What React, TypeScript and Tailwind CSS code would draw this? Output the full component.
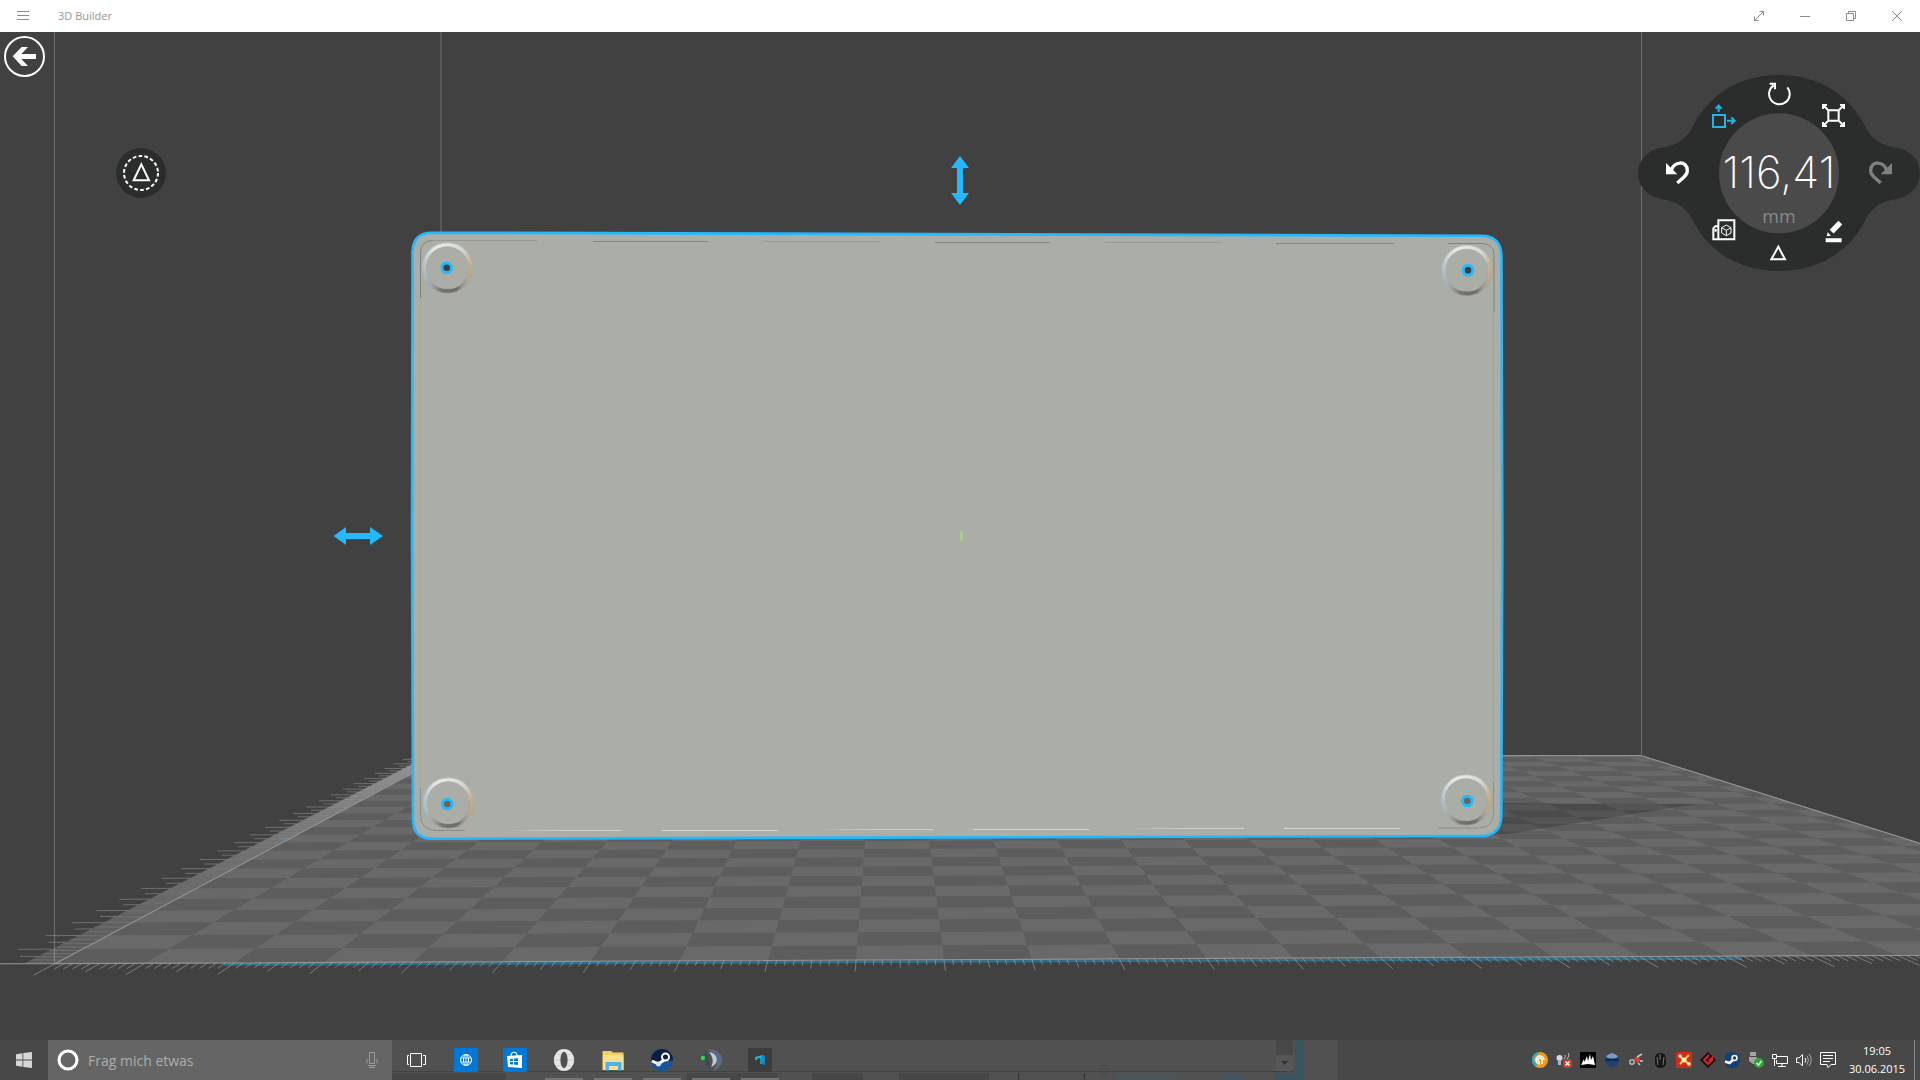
import type { ReactNode } from "react";

type Point = [number, number];

// 254 mm plate, one cell is 10 mm
const PLATE = 25.4;

// build plate corners on the canvas
const FRONT_LEFT: Point = [55, 963.7];
const FRONT_RIGHT: Point = [2271, 953.7];
const BACK_RIGHT: Point = [1641, 755.5];
const BACK_LEFT: Point = [442, 757.5];

function createProjection(p0: Point, p1: Point, p2: Point, p3: Point) {
  const dx1 = p1[0] - p2[0];
  const dx2 = p3[0] - p2[0];
  const dx3 = p0[0] - p1[0] + p2[0] - p3[0];
  const dy1 = p1[1] - p2[1];
  const dy2 = p3[1] - p2[1];
  const dy3 = p0[1] - p1[1] + p2[1] - p3[1];
  const det = dx1 * dy2 - dx2 * dy1;
  const g = (dx3 * dy2 - dx2 * dy3) / det;
  const h = (dx1 * dy3 - dx3 * dy1) / det;
  const a = p1[0] - p0[0] + g * p1[0];
  const b = p3[0] - p0[0] + h * p3[0];
  const d = p1[1] - p0[1] + g * p1[1];
  const e = p3[1] - p0[1] + h * p3[1];

  return (col: number, row: number): string => {
    const u = col / PLATE;
    const v = row / PLATE;
    const w = g * u + h * v + 1;
    return `${((a * u + b * v + p0[0]) / w).toFixed(2)} ${((d * u + e * v + p0[1]) / w).toFixed(2)}`;
  };
}

const project = createProjection(FRONT_LEFT, FRONT_RIGHT, BACK_RIGHT, BACK_LEFT);

function buildLightCells(): string {
  let d = "";
  for (let row = 0; row < PLATE; row++) {
    for (let col = 0; col < PLATE; col++) {
      if ((row + col) % 2 === 0) continue;
      const right = Math.min(col + 1, PLATE);
      const back = Math.min(row + 1, PLATE);
      d += `M${project(col, row)}L${project(right, row)}L${project(right, back)}L${project(col, back)}Z`;
    }
  }
  return d;
}

function tickLength(i: number): number {
  if (i % 10 === 0) return 0.74;
  if (i % 5 === 0) return 0.55;
  return 0.35;
}

function buildTicks(side: "front" | "left"): string {
  let d = "";
  for (let i = 0; i <= PLATE * 10; i++) {
    const len = tickLength(i);
    const pos = i / 10;
    d += side === "front" ? `M${project(pos, 0)}L${project(pos, -len)}` : `M${project(0, pos)}L${project(-len, pos)}`;
  }
  return d;
}

const LIGHT_CELLS = buildLightCells();
const FRONT_TICKS = buildTicks("front");
const LEFT_TICKS = buildTicks("left");

const FEET: { foot: Point; hole: Point; fill: string }[] = [
  { foot: [447.5, 268], hole: [446.7, 267.7], fill: "#3c3f40" },
  { foot: [1467, 270.5], hole: [1468, 270.3], fill: "#3c3f40" },
  { foot: [448.5, 803], hole: [447.3, 804], fill: "#69665f" },
  { foot: [1466.3, 800], hole: [1467.3, 801], fill: "#69665f" },
];

const TOP_SEAMS = [
  [432, 537, 240.5],
  [593, 708, 241.5],
  [764, 880, 241.5],
  [935, 1050, 242.5],
  [1105, 1222, 242.5],
  [1276, 1394, 243.5],
];

const BOTTOM_SEAMS = [
  [505, 622, 830.5],
  [661, 778, 830.5],
  [817, 933, 829.5],
  [973, 1089, 829.5],
  [1129, 1244, 828.5],
  [1284, 1400, 828.5],
];

function Scene() {
  return (
    <svg
      className="absolute inset-0 h-full w-full"
      viewBox="0 32 1920 1008"
      preserveAspectRatio="xMidYMid slice"
      aria-hidden="true"
    >
      <defs>
        <linearGradient id="rim" x1="0.35" y1="0" x2="0.65" y2="1">
          <stop offset="0" stopColor="#e9ebe9" />
          <stop offset="0.3" stopColor="#c4c9c8" />
          <stop offset="0.65" stopColor="#93918c" />
          <stop offset="1" stopColor="#6c6b69" />
        </linearGradient>
        <linearGradient id="rimTint">
          <stop offset="0" stopColor="#a8c2d0" stopOpacity="0.6" />
          <stop offset="0.35" stopColor="#ffffff" stopOpacity="0" />
          <stop offset="0.7" stopColor="#ffffff" stopOpacity="0" />
          <stop offset="1" stopColor="#cdb588" stopOpacity="0.75" />
        </linearGradient>
        <linearGradient id="seamFade">
          <stop offset="0" stopColor="#cfd0cb" stopOpacity="0" />
          <stop offset="0.5" stopColor="#cfd0cb" />
        </linearGradient>
      </defs>

      {/* room edges */}
      <path d="M54.5 32V963M441 32V240M1641.5 32V755M0 963.7H56" stroke="#6a6a6a" strokeWidth="1.2" />

      {/* build plate */}
      <path
        d={`M${project(0, 0)}L${project(PLATE, 0)}L${project(PLATE, PLATE)}L${project(0, PLATE)}Z`}
        fill="#5d5d5d"
      />
      <path d={LIGHT_CELLS} fill="#696969" />
      <path d="M1495 803L1697 804L1507 834H1495Z" fill="#000" fillOpacity="0.19" />
      <path d="M224 964.5L1742 958.5" stroke="#2f6f8b" strokeWidth="2.5" />
      <path d={FRONT_TICKS} stroke="#fff" strokeOpacity="0.3" />
      <path d={LEFT_TICKS} stroke="#fff" strokeOpacity="0.24" />
      <path d="M280 838.5H292" stroke="#3f9cc4" strokeWidth="2" strokeOpacity="0.5" />
      <path
        d={`M${project(0, PLATE)}L${project(0, 0)}L${project(PLATE, 0)}L${project(PLATE, PLATE)}Z`}
        fill="none"
        stroke="#939393"
        strokeWidth="1.2"
      />

      {/* model */}
      <path
        d="M432 232.7L1481 235.7Q1501 235.7 1501.5 256L1502.3 540L1501.3 816Q1501 835.7 1481 836L432 838.7Q413 838.7 413 819L412 540L412.5 252Q413 232.7 432 232.7Z"
        fill="#abaea6"
        stroke="#22b9ff"
        strokeWidth="2.6"
      />
      <path d="M420.5 298V252Q421 241 432 240.5M1448 243.5H1482Q1493.5 244 1494 254V312" fill="none" stroke="#83837e" />
      <path d="M420.5 788V816Q421 829 434 830.5H465M1439 828H1480Q1493 827 1493.5 814V782" fill="none" stroke="#8e8e88" />
      <path d="M1493.5 312V782" stroke="#98a4a9" strokeOpacity="0.7" />
      <path d="M420.5 298V788" stroke="#b0a68e" strokeOpacity="0.7" />
      {TOP_SEAMS.map(([x1, x2, y], i) => (
        <path key={x1} d={`M${x1} ${y}H${x2}`} stroke="#83837e" strokeOpacity={i % 2 ? 0.9 : 0.45} />
      ))}
      {BOTTOM_SEAMS.map(([x1, x2, y], i) => (
        <rect
          key={x1}
          x={x1}
          y={y - 0.5}
          width={x2 - x1}
          height="1"
          fill={i % 2 ? "#d3d4cf" : "url(#seamFade)"}
        />
      ))}
      {FEET.map(({ foot, hole, fill }) => (
        <g key={foot.join()}>
          <circle cx={foot[0]} cy={foot[1]} r="24.5" fill="none" stroke="url(#rim)" strokeWidth="2" strokeOpacity="0.5" />
          <circle cx={foot[0]} cy={foot[1]} r="22.8" fill="none" stroke="url(#rim)" strokeWidth="3.4" />
          <circle cx={foot[0]} cy={foot[1]} r="23.2" fill="none" stroke="url(#rimTint)" strokeWidth="4" />
          <circle cx={foot[0] - 0.5} cy={foot[1] - 0.7} r="21" fill="#abaea6" />
          <circle cx={hole[0]} cy={hole[1]} r="4.8" fill={fill} stroke="#22b9ff" strokeWidth="3" />
        </g>
      ))}
      <path d="M961.5 531V541" stroke="#9fe070" strokeWidth="2" />

      {/* move handles */}
      <path d="M333.5 536L346 527V533H370V527L383 536L370 545V539H346V545Z" fill="#22b9ff" />
      <path d="M960 156L969 168H963V193H969L960 205L951 193H957V168H951Z" fill="#22b9ff" />
    </svg>
  );
}

function WindowButton({ label, children }: { label: string; children: ReactNode }) {
  return (
    <button type="button" aria-label={label} className="flex h-8 w-[46px] items-center justify-center">
      <svg width="12" height="12" viewBox="0 0 12 12" fill="none" stroke="#8c8c8c">
        {children}
      </svg>
    </button>
  );
}

function TitleBar() {
  return (
    <header className="flex h-8 items-center bg-white">
      <WindowButton label="Menü">
        <path d="M0 1.5H12M0 5.5H12M0 9.5H12" />
      </WindowButton>
      <h1 className="ml-3 text-[11px] text-[#969696]">3D Builder</h1>
      <div className="ml-auto flex">
        <WindowButton label="Vollbild">
          <path d="M1.5 10.5L10.5 1.5M6.5 1.5H10.5V5.5M1.5 6.5V10.5H5.5" />
        </WindowButton>
        <WindowButton label="Minimieren">
          <path d="M1 6.5H11" />
        </WindowButton>
        <WindowButton label="Wiederherstellen">
          <path d="M1.5 3.5H8.5V10.5H1.5ZM3.5 3.5V1.5H10.5V8.5H8.5" />
        </WindowButton>
        <WindowButton label="Schließen">
          <path d="M1 1L11 11M11 1L1 11" />
        </WindowButton>
      </div>
    </header>
  );
}

// glyphs share the dial's drawing space: 3 units per pixel
function DialButton({
  label,
  className,
  viewBox,
  children,
}: {
  label: string;
  className: string;
  viewBox: string;
  children: ReactNode;
}) {
  return (
    <button type="button" aria-label={label} className={`absolute h-7 w-7 ${className}`}>
      <svg className="h-7 w-7" viewBox={viewBox} fill="none" stroke="currentColor" strokeWidth="6">
        {children}
      </svg>
    </button>
  );
}

function Dial() {
  return (
    <section aria-label="Objekt bearbeiten" className="relative mt-[43px] h-[196px] w-[282px] text-white">
      <svg className="h-full w-full" viewBox="54 224 846 588" aria-hidden="true">
        <path
          d="M54 519C54 478 85 448 125 442C165 436 195 420 215 385C260 290 350 224 477 224S694 290 739 385C759 420 789 436 829 442C869 448 900 478 900 519S869 590 829 596C789 602 759 618 739 653C694 748 604 812 477 812S260 748 215 653C195 618 165 602 125 596C85 590 54 560 54 519Z"
          fill="#2b2d2c"
        />
        <circle cx="477" cy="519" r="180" fill="#4a4a4a" />
      </svg>
      <div className="absolute inset-x-0 top-[67px] flex flex-col items-center">
        <output className="font-['Inter'] text-[44px] leading-[60px] font-extralight">116,41</output>
        <span className="mt-1 text-lg leading-5 text-[#898989]">mm</span>
      </div>

      <DialButton label="Drehen" className="left-[127px] top-[5px]" viewBox="435 241 84 84">
        <path d="M502 263A31 31 0 1 1 461 257M449 252H465V269" />
      </DialButton>
      <DialButton label="Verschieben" className="left-[72px] top-[27px] text-[#22b5ec]" viewBox="270 306 84 84">
        <path d="M279 345H315V381H279Z" />
        <path d="M296 336V318M287 326L296 317L305 326M321 362H343M334 352L344 362L334 372" strokeWidth="6" />
      </DialButton>
      <DialButton label="Skalieren" className="left-[181px] top-[26px]" viewBox="597 303 84 84">
        <path d="M625 331H656V362H625Z" />
        <path
          d="M609 327V315H621M609 315L624 330M660 315H672V327M672 315L657 330M609 366V378H621M609 378L624 363M672 366V378H660M672 378L657 363"
          strokeWidth="6"
        />
      </DialButton>
      <DialButton label="Rückgängig" className="left-[25px] top-[84px]" viewBox="129 477 84 84">
        <path d="M154 512C160 483 202 480 202 512C202 525 190 532 172 549" strokeWidth="10" />
        <path d="M138 489V523H172Z" fill="currentColor" stroke="none" />
      </DialButton>
      <DialButton label="Wiederholen" className="left-[229px] top-[84px] text-[#7f807f]" viewBox="741 477 84 84">
        <path d="M800 512C794 483 752 480 752 512C752 525 764 532 782 549" strokeWidth="10" />
        <path d="M816 489V523H782Z" fill="currentColor" stroke="none" />
      </DialButton>
      <DialButton label="Ansicht" className="left-[72px] top-[141px]" viewBox="269 647 84 84">
        <path d="M294 660H342V717H294ZM294 717H279V684L285 678H294M286 686V694" strokeWidth="6" />
        <path d="M318 674L332 682V698L318 706L304 698V682ZM304 682L318 690L332 682M318 690V706" strokeWidth="3" />
      </DialButton>
      <DialButton label="Bearbeiten" className="left-[182px] top-[142px]" viewBox="601 650 84 84">
        <path d="M662 667L636 694" strokeWidth="16" />
        <path d="M621 708L624 696L634 706ZM618 714H666V726H618Z" fill="currentColor" stroke="none" />
      </DialButton>
      <DialButton label="Auswahl" className="left-[126px] top-[164px]" viewBox="432 716 84 84">
        <path d="M475 739L495 777H454Z" />
      </DialButton>
    </section>
  );
}

function TaskButton({ label, running, children }: { label: string; running?: boolean; children: ReactNode }) {
  return (
    <button type="button" aria-label={label} className="flex h-10 w-[49px] flex-col items-center">
      <svg className="mt-2" width="24" height="24" viewBox="0 0 24 24" fill="none">
        {children}
      </svg>
      {running ? <span className="mt-auto h-[2px] w-[38px] bg-[#757575]" /> : null}
    </button>
  );
}

function TrayButton({ label, children }: { label: string; children: ReactNode }) {
  return (
    <button type="button" aria-label={label} className="flex h-10 w-6 items-center justify-center">
      <svg width="16" height="16" viewBox="0 0 16 16" fill="none">
        {children}
      </svg>
    </button>
  );
}

function TaskApps() {
  return (
    <nav aria-label="Apps" className="flex">
      <TaskButton label="Taskansicht">
        <path d="M5.5 5.500H16.500V18.500H5.500ZM4 7.500H2.500V16.500H4M18 7.500H20.500V16.500H18" stroke="#fff" />
      </TaskButton>
      <TaskButton label="Browser">
        <path d="M0 0H24V24H0Z" fill="#0078d7" />
        <circle cx="12" cy="12" r="5.500" stroke="#fff" />
        <ellipse cx="12" cy="12" rx="2.500" ry="5.500" stroke="#fff" />
        <path d="M7 10H17M7 14H17M12 6.500V17.500" stroke="#fff" strokeWidth="0.800" />
      </TaskButton>
      <TaskButton label="Store">
        <path d="M0 0H24V24H0Z" fill="#0078d7" />
        <path d="M4 8L19 7V20L5 19Z" fill="#fff" />
        <path d="M8 8C8 3 14 3 14 8" stroke="#fff" strokeWidth="1.200" />
        <path d="M7 11L10 10.700V13H7ZM11 10.600L15 10.200V13H11ZM7 14H10V16.500L7 16.200ZM11 14H15V17L11 16.600Z" fill="#0078d7" />
      </TaskButton>
      <TaskButton label="Opera" running>
        <ellipse cx="12" cy="12" rx="10.200" ry="11" fill="#e6e6e6" />
        <path d="M2 12H22M5 6Q12 9 19 6M5 18Q12 15 19 18" stroke="#c4c4c4" strokeWidth="0.800" />
        <ellipse cx="12" cy="12" rx="3.600" ry="8.200" fill="#515151" />
      </TaskButton>
      <TaskButton label="Explorer" running>
        <path d="M1.500 3H10L12 4.500H22.500V22H1.500Z" fill="#f5cf5f" />
        <path d="M2 7H22.500V22H2Z" fill="#fbe08a" />
        <path d="M4.500 14H20.500V22.500H17V18H8V22.500H4.500Z" fill="#4fb2e8" />
      </TaskButton>
      <TaskButton label="Steam" running>
        <circle cx="12" cy="12" r="11" fill="#1a5596" />
        <path d="M1 12A11 11 0 0 1 23 12L12 14Z" fill="#0b1d45" />
        <circle cx="15.500" cy="9" r="3.500" stroke="#fff" strokeWidth="2" />
        <path d="M2 13L8.500 16L14 12" stroke="#fff" strokeWidth="3" />
        <circle cx="8.500" cy="16" r="2.500" fill="#d9e3ef" />
      </TaskButton>
      <TaskButton label="TeamSpeak" running>
        <path d="M9 1C25 0 29 19 13 23C21 17 18 6 9 1Z" fill="#5d6883" />
        <path d="M10 4C19 5 21 16 12 19C15 14 14 9 10 4Z" fill="#c3cadb" />
        <path d="M6 2C10 7 10 16 12 21L6 17C8 12 4 8 6 2Z" fill="#3b4864" />
        <circle cx="4" cy="10" r="2.200" fill="#25e03a" />
      </TaskButton>
      <TaskButton label="3D Builder" running>
        <path d="M0 0H24V24H0Z" fill="#3d3d3d" />
        <path d="M8.200 12V9.800L13.500 8.500V16" stroke="#12c0dc" strokeWidth="2.200" />
        <path d="M13.500 7L17 8V17L13.500 16Z" fill="#1189c4" />
      </TaskButton>
    </nav>
  );
}

function Tray() {
  return (
    <div className="ml-auto flex">
      <TrayButton label="Avast">
        <circle cx="8" cy="8" r="8" fill="#f39a1c" />
        <path d="M8 0A8 8 0 0 0 4 15L5 12A5 5 0 0 1 5 3Z" fill="#28a6c9" />
        <path d="M8 12A4 4 0 1 1 12 8M8 10A2 2 0 1 1 10 8V12" stroke="#fff" strokeWidth="1.500" />
      </TrayButton>
      <TrayButton label="Empfänger">
        <circle cx="3.500" cy="6" r="3" fill="#d3dae4" />
        <path d="M2 8H5V13H2Z" fill="#aab4c2" />
        <path d="M8 7Q10 5 9 3M11 7Q14 4 12.500 1" stroke="#bbb" />
        <rect x="7" y="7" width="9" height="9" rx="3" fill="#d13a24" />
        <path d="M9.500 9.500L13.500 13.500M13.500 9.500L9.500 13.500" stroke="#fff" strokeWidth="1.500" />
      </TrayButton>
      <TrayButton label="Corsair">
        <path d="M0 0H16V16H0Z" fill="#000" />
        <path d="M1 13L4 7L4.500 10L7 4L8 9L10 2L11 8L13 4L15 13L8 12Z" fill="#fff" />
      </TrayButton>
      <TrayButton label="Kugel">
        <circle cx="8" cy="8" r="7" fill="#1d4173" />
        <path d="M2 5C5 0 11 0 14 5Q8 8 2 5Z" fill="#7d9cc4" />
        <path d="M1 8H15" stroke="#12233f" strokeWidth="1.500" />
      </TrayButton>
      <TrayButton label="Flieger">
        <path d="M6 6L11 4L12 9L9 11Z" fill="#e0402f" />
        <circle cx="4" cy="10" r="2.200" stroke="#b4b4b4" strokeWidth="1.500" />
        <path d="M9 5L14 2M12 9L15 9M10 11L12 13" stroke="#c9c9c9" strokeWidth="1.500" />
      </TrayButton>
      <TrayButton label="Maus">
        <rect x="3" y="1" width="11" height="15" rx="5" fill="#161616" />
        <path d="M8 2V8M5 5L6 13M12 5L11 13" stroke="#777" />
      </TrayButton>
      <TrayButton label="Molekül">
        <rect width="16" height="16" rx="1" fill="#d62a1c" />
        <path d="M4 4L8 8L13 3M8 8L4 12M8 8L13 12" stroke="#f6d25a" strokeWidth="2" />
        <circle cx="8" cy="8" r="2.500" fill="#fff2b0" />
        <circle cx="4" cy="4" r="1.800" fill="#fff2b0" />
        <circle cx="13" cy="12" r="1.800" fill="#fff2b0" />
      </TrayButton>
      <TrayButton label="Gaming">
        <path d="M8 0L16 8L8 16L0 8Z" fill="#170f10" />
        <path d="M9 3L4 8L8 12L12 8V6L9 9" stroke="#dc2231" strokeWidth="2" />
      </TrayButton>
      <TrayButton label="Steam">
        <circle cx="8" cy="8" r="8" fill="#15407c" />
        <circle cx="10.500" cy="6" r="2.500" stroke="#fff" strokeWidth="1.500" />
        <path d="M1 9.500L5.500 11L9 8" stroke="#fff" strokeWidth="2.500" />
      </TrayButton>
      <TrayButton label="USB">
        <path d="M2 0H8V4H2ZM1 5H9V12H5L1 9Z" fill="#a5a5a5" />
        <circle cx="11" cy="11" r="5" fill="#2ba436" />
        <path d="M8.500 11L10.500 13L13.500 9" stroke="#fff" strokeWidth="1.500" />
      </TrayButton>
      <TrayButton label="Netzwerk">
        <path d="M5 4.500H15.500V11.500H4.500V8M10 11.500V14M6 14.500H14M0.500 2.500H4.500V6.500H0.500ZM2.500 7V14" stroke="#fff" />
      </TrayButton>
      <TrayButton label="Lautstärke">
        <path d="M0.500 6V10.500H3L6.500 14V2.500L3 6Z" stroke="#fff" />
        <path d="M9 6Q10.500 8 9 10.500" stroke="#fff" />
        <path d="M11 4Q14 8 11 12.500M13 2Q17.500 8 13 14" stroke="#a5a5a5" />
      </TrayButton>
      <TrayButton label="Info-Center">
        <path d="M0.500 0.500H15.500V12.500H11L8 15.500L7 12.500H0.500ZM3 3.500H13M3 6.500H13M3 9.500H10" stroke="#fff" />
      </TrayButton>
      <button type="button" className="w-[74px] text-center text-[11px] leading-[18px] text-white">
        <time className="block">19:05</time>
        <time className="block">30.06.2015</time>
      </button>
      <button type="button" aria-label="Desktop anzeigen" className="w-[6px] border-l border-[#8a8a8a]" />
    </div>
  );
}

// windows shining through the translucent bar
function TaskbarBackdrop() {
  return (
    <svg
      className="absolute inset-0 h-full w-full"
      viewBox="0 1040 1920 40"
      preserveAspectRatio="xMinYMid slice"
      aria-hidden="true"
    >
      <path d="M392 1040H1338V1080H392Z" fill="#515151" />
      <path d="M392 1073H506V1080H392ZM687 1073H777V1080H687ZM812 1073H863V1080H812ZM899 1073H989V1080H899Z" fill="#474747" />
      <path d="M392 1071.500H1294" stroke="#424242" />
      <path d="M1276 1040H1293V1055H1276Z" fill="#484848" />
      <path d="M1276 1055H1293V1071H1276Z" fill="#575757" />
      <path d="M1281 1061H1288L1284.500 1065Z" fill="#343434" />
      <path d="M1295 1040H1304V1080H1275V1073H1295Z" fill="#3a5460" />
      <path d="M1223 1073H1241V1080H1223Z" fill="#3f5560" />
      <path d="M1118 1073H1178L1172 1080H1115Z" fill="#4b565b" />
      <path d="M1018.500 1073V1080M1084.500 1073V1080" stroke="#303030" />
      <circle cx="1104" cy="1070" r="4" fill="none" stroke="#474747" />
    </svg>
  );
}

function Taskbar() {
  return (
    <footer className="relative h-10 bg-[#484848]">
      <TaskbarBackdrop />
      <div className="relative flex h-10">
        <button type="button" aria-label="Start" className="flex w-12 items-center justify-center">
          <svg width="16" height="16" viewBox="0 0 16 16" fill="#d6d6d6">
            <path d="M0 2.200L6.500 1.200V7.600H0ZM7.300 1.100L16 0V7.600H7.300ZM0 8.400H6.500V14.800L0 13.800ZM7.300 8.400H16V16L7.300 14.900Z" />
          </svg>
        </button>
        <label className="flex w-[344px] items-center gap-[9px] bg-[#656565] pr-3 pl-[9px]">
          <svg width="22" height="22" viewBox="0 0 22 22" fill="none" aria-hidden="true">
            <circle cx="11" cy="11" r="9" stroke="#fff" strokeWidth="3" />
          </svg>
          <input
            type="text"
            aria-label="Suche"
            placeholder="Frag mich etwas"
            className="min-w-0 flex-1 bg-transparent pt-[2px] text-sm text-white outline-none placeholder:text-[#adadad]"
          />
          <svg width="16" height="18" viewBox="0 0 16 18" fill="none" stroke="#9b9b9b" aria-hidden="true">
            <path d="M5.500 1.500H10.500V12.500H5.500ZM3 8V12.500M13 8V12.500M4 14.500H12M8 14.500V16.500M5 16.500H11" />
          </svg>
        </label>
        <TaskApps />
        <Tray />
      </div>
    </footer>
  );
}

export default function App() {
  return (
    <div className="flex min-h-screen flex-col bg-[#414141] font-['Open_Sans','Noto_Sans',sans-serif]">
      <TitleBar />
      <main className="relative flex flex-1 items-start justify-between overflow-hidden">
        <Scene />
        <div className="relative flex flex-col items-start p-1">
          <button type="button" aria-label="Zurück">
            <svg width="41" height="41" viewBox="12 108 123 123">
              <circle cx="73.500" cy="169.500" r="58.500" fill="none" stroke="#fff" strokeWidth="6" />
              <path d="M38 169L65 141H84L64 162H108V177H64L84 198H65Z" fill="#fff" />
            </svg>
          </button>
          <button type="button" aria-label="Gruppe auswählen" className="mt-[71px] ml-28">
            <svg width="50" height="50" viewBox="348 444 150 150" fill="none" stroke="#fff">
              <circle cx="423" cy="519" r="75" fill="#2b2d2c" stroke="none" />
              <circle cx="423" cy="519" r="51" strokeWidth="6" strokeDasharray="11 6.800" />
              <path d="M424 493L447 541H401Z" strokeWidth="6" />
            </svg>
          </button>
        </div>
        <Dial />
      </main>
      <Taskbar />
    </div>
  );
}
